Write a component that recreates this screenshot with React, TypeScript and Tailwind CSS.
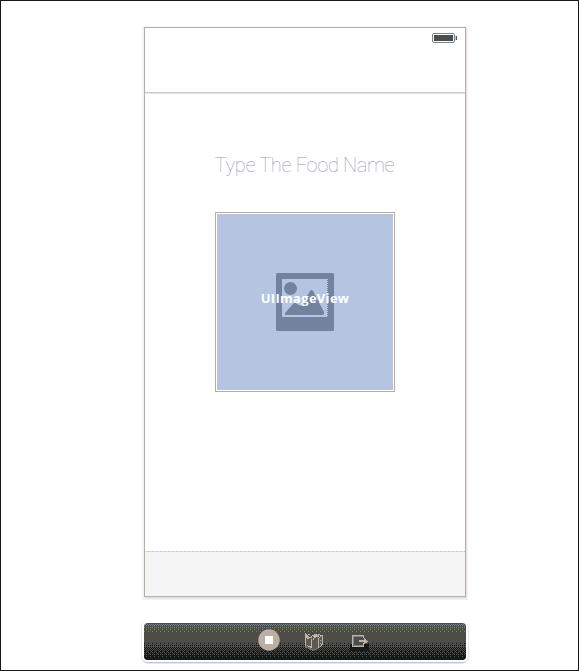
const BAYER = [
  [0, 8, 2, 10],
  [12, 4, 14, 6],
  [3, 11, 1, 9],
  [15, 7, 13, 5],
];

// Ordered-dither cells for the dock: a blue sheen on top, black toward the base.
function ditherCells() {
  const cells: { x: number; y: number; fill: string }[] = [];
  for (let y = 0; y < 37; y++) {
    for (let x = 0; x < 4; x++) {
      const t = (BAYER[y % 4][x] + 0.5) / 16;
      if (y > 0 && y < 9 && t < 0.45 * (1 - y / 11)) cells.push({ x, y, fill: "#71829f" });
      if (y >= 20 && t < (y - 18) / 17) cells.push({ x, y, fill: "#171917" });
    }
  }
  return cells;
}

function DockTexture() {
  return (
    <svg className="absolute inset-0 h-full w-full" shapeRendering="crispEdges" aria-hidden="true">
      <defs>
        <pattern id="dither" width="4" height="37" patternUnits="userSpaceOnUse">
          {ditherCells().map((c) => (
            <rect key={`${c.x}-${c.y}`} x={c.x} y={c.y} width="1" height="1" fill={c.fill} />
          ))}
        </pattern>
      </defs>
      <rect width="100%" height="37" fill="url(#dither)" />
    </svg>
  );
}

function Battery() {
  return (
    <svg className="h-[10px] w-[26px]" viewBox="0 0 26 10" aria-hidden="true">
      <rect x="0.5" y="0.5" width="22" height="9" rx="1.5" fill="#fff" stroke="#7184a0" />
      <rect x="2" y="2" width="19" height="6" fill="#4e4d47" />
      <path d="M23 3h1v4h-1z" fill="#b5c4e1" />
      <path d="M24 3h1v4h-1z" fill="#4e4d47" />
    </svg>
  );
}

function PictureIcon() {
  return (
    <svg className="h-[58px] w-[58px]" viewBox="0 0 58 58" aria-hidden="true">
      <rect width="58" height="58" rx="1.5" fill="#71839f" />
      <path d="M6 6h46v38H6z" fill="#b5c4e1" />
      <path d="M51.5 7v37" stroke="#71839f" strokeDasharray="1 1" shapeRendering="crispEdges" />
      <circle cx="14.5" cy="15.5" r="6.5" fill="#71839f" />
      <path d="M9 41.5V40L17 31q2-2 4 0l4 2L34 18q1.5-2 3 0l11 21v2l-1 1H10z" fill="#71839f" />
    </svg>
  );
}

function FirstResponderIcon() {
  return (
    <svg className="h-[20px] w-[20px]" viewBox="0 0 20 20" shapeRendering="crispEdges" aria-hidden="true">
      <path d="M1 5h6l2 1 5-1 5-1v9l-5 4-4 2-9-6z" fill="#5b5953" />
      <path d="M1 14h2v1h2v1h2v1h2v1h1v-1h2v-1h2v-1h2v1h-2v1h-2v1h-2v1H8v-1H6v-1H4v-1H1z" fill="#77736a" />
      <path d="M1 1h1v1h1v1h1v1h1v1h1v1H5v1H3V6H2v8H1zM5 5h3v1H5zM4 2h2v1H4zM7 4h1V3h2v1H8v1H7zM7 7h1v9H7zM6 14h1v2H6zM3 13h1v1H3zM4 14h2v1H4z" fill="#c1b2a6" />
      <path d="M9 4h2v1H9zM10 2h3v1h2v2h-3v1h-2zM9 6h1v2H9zM14 6h1v10h-1zM15 5h1V3h3v1h-2v1h-1v1h-1zM12 3h2V2h2v1h-2v1h-2zM18 4h1v9h-1zM17 12h1v2h-1zM16 14h1v1h-1zM16 8h1v1h-1zM16 11h1v1h-1z" fill="#c1b2a6" />
    </svg>
  );
}

function ExitIcon() {
  return (
    <svg className="h-[22px] w-[24px]" viewBox="0 0 24 22" shapeRendering="crispEdges" aria-hidden="true">
      <path d="M2 12h19v7H2z" fill="#171917" />
      <path d="M5 3h11v11H5z" fill="#4d4c46" />
      <path d="M5 4h11v1H5z" fill="#7184a0" />
      <path d="M4 3h12v3h-1V4H5v10h10v-3h1v4H4z" fill="#c1b2a6" />
      <path d="M5 4h1v9H5zM6 13h9v1H6z" fill="#7184a0" />
      <path d="M11 8h5V6h1v1h1v1h1v1h1v1h-1v1h-2v1h-1v-2h-5z" fill="#c1b2a6" />
    </svg>
  );
}

export default function App() {
  return (
    <main className="flex h-[671px] w-[579px] flex-col items-start overflow-hidden border border-[#171719] bg-white pt-[26px] pl-[143px]">
      <section className="flex h-[570px] w-[322px] shrink-0 flex-col border border-[#b9aca1] bg-white shadow-[1px_2px_0_#e4e2e2,0_1px_0_2px_#f4f4f5]">
        <header className="flex h-[66px] shrink-0 flex-col justify-between">
          <div className="flex justify-end pt-[5px] pr-[7px]">
            <Battery />
          </div>
          <div className="h-[2px] border-b border-[#e3e5e5] bg-[repeating-linear-gradient(90deg,#aebccb_0px,#aebccb_1px,#d2d6d6_1px,#d2d6d6_2px)]" />
        </header>
        <div className="flex flex-1 flex-col items-center">
          <h1 className="mt-[56px] h-[30px] whitespace-nowrap pr-px font-['Roboto',sans-serif] text-[20px] leading-[30px] font-thin tracking-[-0.33px] text-[#959bb2]">
            Type The Food Name
          </h1>
          <div className="mt-[32px] grid h-[180px] w-[180px] place-items-center border border-[#b9aca1] bg-[#b5c4e1] shadow-[inset_0_0_0_1px_#fff]">
            <div className="col-start-1 row-start-1">
              <PictureIcon />
            </div>
            <span className="z-10 col-start-1 row-start-1 -translate-y-1 font-['Open_Sans',sans-serif] text-[13px] leading-4 font-bold tracking-[0.3px] text-white">
              UIImageView
            </span>
          </div>
        </div>
        <footer className="h-[45px] shrink-0 bg-[#f5f5f5]">
          <div className="h-px bg-[repeating-linear-gradient(90deg,#dadbd9_0px,#dadbd9_3px,#b5c4e1_3px,#b5c4e1_4px)]" />
        </footer>
      </section>
      <nav className="relative mt-[26px] flex h-[37px] w-[322px] shrink-0 rounded bg-[#4d4c46] shadow-[0_0_0_2px_#fff,0_2px_0_#fff,0_3px_0_#b5c4e1,0_1px_0_3px_#e5e6eb]">
        <div className="absolute inset-0 overflow-hidden rounded">
          <DockTexture />
        </div>
        <div className="relative flex items-start pl-[114px]">
          <svg className="mt-[6px] h-[22px] w-[22px]" viewBox="0 0 22 22" aria-hidden="true">
            <circle cx="11" cy="11" r="10.7" fill="#bbaea2" />
            <path d="M7 7h8v8H7z" fill="#fff" />
          </svg>
          <div className="mt-[9px] ml-[24px]">
            <FirstResponderIcon />
          </div>
          <div className="mt-[9px] ml-[24px]">
            <ExitIcon />
          </div>
        </div>
      </nav>
    </main>
  );
}
